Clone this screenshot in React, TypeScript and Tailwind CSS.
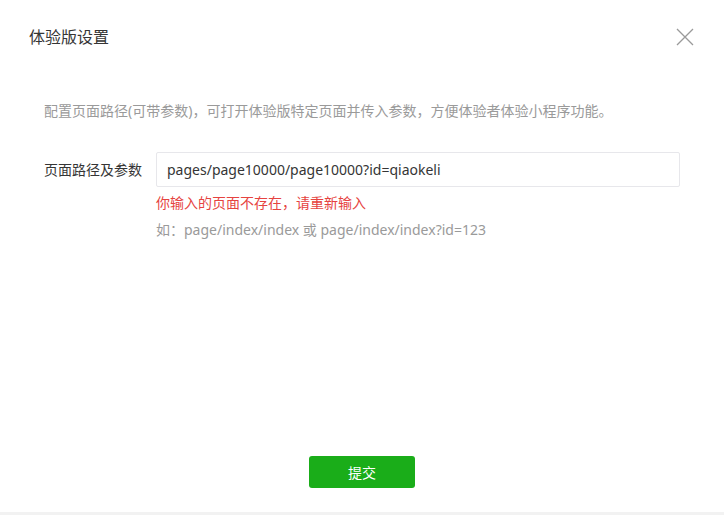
export default function App() {
  return (
    <div
      className="w-[724px] h-[515px] bg-[#f2f2f2] flex flex-col"
      style={{ fontFamily: '"Noto Sans", "Noto Sans CJK SC", sans-serif' }}
    >
      <div className="h-[512px] bg-white flex flex-col">
        {/* Header */}
        <div className="flex items-center justify-between pl-[29px] pr-[29px] pt-[24px] h-[50px]">
          <h2 className="text-[16px] text-[#353535] leading-[24px]">体验版设置</h2>
          <button className="w-[20px] h-[20px] flex items-center justify-center text-[#9a9a9a]">
            <svg width="18" height="18" viewBox="0 0 18 18" fill="none" stroke="currentColor" strokeWidth="1.3">
              <path d="M1 1L17 17M17 1L1 17" />
            </svg>
          </button>
        </div>

        {/* Body */}
        <div className="flex-1 px-[44px] pt-[51px]">
          <p className="text-[14px] text-[#9a9a9a] leading-[20px]">
            配置页面路径(可带参数)，可打开体验版特定页面并传入参数，方便体验者体验小程序功能。
          </p>

          <div className="flex mt-[31px]">
            <label className="w-[112px] shrink-0 text-[14px] text-[#353535] leading-[35px]">页面路径及参数</label>
            <div className="flex-1">
              <div className="w-[524px] h-[35px] border border-[#e7e7eb] rounded-[2px] flex items-center px-[10px]">
                <span className="text-[14px] text-[#353535]">pages/page10000/page10000?id=qiaokeli</span>
              </div>
              <p className="mt-[6px] text-[14px] text-[#e64340] leading-[20px]">你输入的页面不存在，请重新输入</p>
              <p className="mt-[7px] text-[14px] text-[#9a9a9a] leading-[20px]">
                如：page/index/index 或 page/index/index?id=123
              </p>
            </div>
          </div>
        </div>

        {/* Footer */}
        <div className="flex justify-center pb-[24px]">
          <button className="w-[106px] h-[32px] bg-[#1aad19] rounded-[3px] text-white text-[14px]">提交</button>
        </div>
      </div>
    </div>
  );
}
